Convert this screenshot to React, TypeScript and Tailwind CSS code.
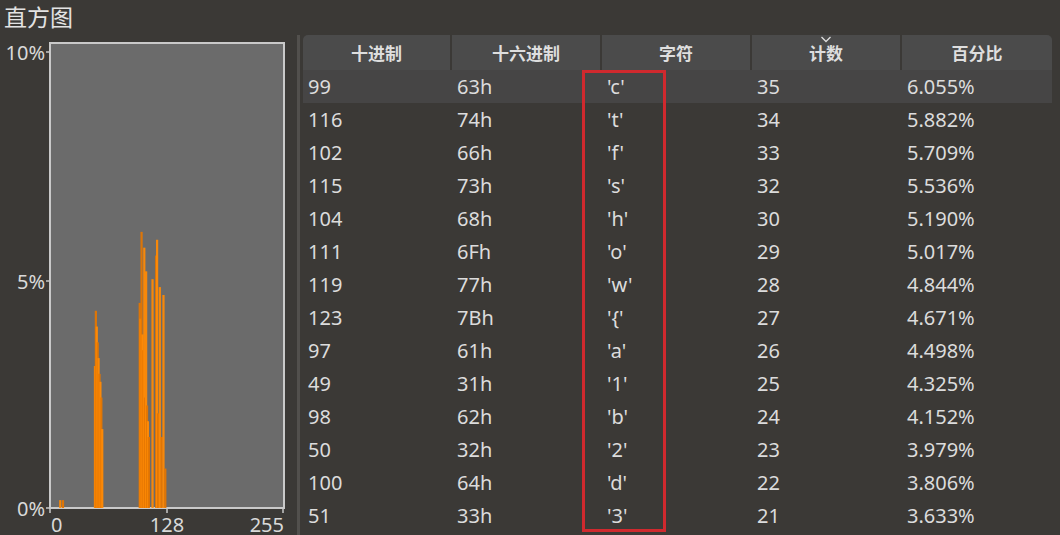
import React from "react"

const rows = [
  [99, "63h", "'c'", 35, "6.055%"],
  [116, "74h", "'t'", 34, "5.882%"],
  [102, "66h", "'f'", 33, "5.709%"],
  [115, "73h", "'s'", 32, "5.536%"],
  [104, "68h", "'h'", 30, "5.190%"],
  [111, "6Fh", "'o'", 29, "5.017%"],
  [119, "77h", "'w'", 28, "4.844%"],
  [123, "7Bh", "'{'", 27, "4.671%"],
  [97, "61h", "'a'", 26, "4.498%"],
  [49, "31h", "'1'", 25, "4.325%"],
  [98, "62h", "'b'", 24, "4.152%"],
  [50, "32h", "'2'", 23, "3.979%"],
  [100, "64h", "'d'", 22, "3.806%"],
  [51, "33h", "'3'", 21, "3.633%"],
] as const

// counts for the bytes not in the visible table rows
const extra: Record<number, number> = {
  10: 1, 13: 1,
  48: 18, 52: 19, 53: 17, 54: 16, 55: 14, 56: 10,
  101: 20, 103: 14, 105: 13, 106: 11, 107: 9, 117: 12, 121: 9, 125: 5,
}

const counts: Record<number, number> = { ...extra }
rows.forEach(r => { counts[r[0]] = r[3] })
const total = 578

const headers = ["十进制", "十六进制", "字符", "计数", "百分比"]

function Histogram() {
  const x0 = 50, xs = 233 / 255, yBase = 508, perPct = 45.6
  const label = { fontSize: 20, fill: "#d9d9d9", fontFamily: "'Noto Sans', sans-serif" }
  return (
    <svg width={300} height={500} viewBox="0 35 300 500" className="block">
      <rect x={50} y={43} width={234} height={465} fill="#6b6b6b" stroke="#c9c9c9" strokeWidth={2} />
      {Object.entries(counts).map(([k, c], i) => {
        const v = Number(k)
        const h = (c / total) * 100 * perPct
        return (
          <rect key={k} x={x0 + v * xs} y={yBase - h} width={2.2} height={h}
            fill={i % 2 ? "#e47602" : "#ff8a05"} opacity={0.95} />
        )
      })}
      <line x1={46} y1={52} x2={50} y2={52} stroke="#c9c9c9" strokeWidth={1.5} />
      <line x1={46} y1={281} x2={50} y2={281} stroke="#c9c9c9" strokeWidth={1.5} />
      <line x1={46} y1={508} x2={50} y2={508} stroke="#c9c9c9" strokeWidth={1.5} />
      <line x1={50} y1={508} x2={50} y2={513} stroke="#c9c9c9" strokeWidth={1.5} />
      <line x1={167} y1={508} x2={167} y2={513} stroke="#c9c9c9" strokeWidth={1.5} />
      <line x1={283} y1={508} x2={283} y2={513} stroke="#c9c9c9" strokeWidth={1.5} />
      <text x={45} y={52} textAnchor="end" dominantBaseline="central" {...label}>10%</text>
      <text x={45} y={281} textAnchor="end" dominantBaseline="central" {...label}>5%</text>
      <text x={45} y={508} textAnchor="end" dominantBaseline="central" {...label}>0%</text>
      <text x={51} y={524} textAnchor="start" dominantBaseline="central" {...label}>0</text>
      <text x={167} y={524} textAnchor="middle" dominantBaseline="central" {...label}>128</text>
      <text x={284} y={524} textAnchor="end" dominantBaseline="central" {...label}>255</text>
    </svg>
  )
}

export default function App() {
  return (
    <div className="w-[1060px] h-[535px] overflow-hidden bg-[#3b3936] flex flex-col font-['Noto_Sans','Noto_Sans_CJK_SC',sans-serif] text-[#dcdcdc]">
      <div className="h-[35px] shrink-0 pl-[4px] text-[23px] leading-[32px] text-[#e3e3e3] font-['Noto_Sans_CJK_SC',sans-serif]">直方图</div>
      <div className="flex flex-1">
        <div className="w-[297px] shrink-0 overflow-hidden">
          <Histogram />
        </div>
        <div className="w-[3px] bg-[#52504d] shrink-0" />
        <div className="relative w-[749px] ml-[3px]">
          <div className="grid grid-cols-[149px_150px_150px_150px_150px] h-[35px] bg-[#4b4b4b] rounded-t-[5px] overflow-hidden">
            {headers.map((h, i) => (
              <div key={h}
                className={`relative flex items-center justify-center text-[17px] font-bold text-[#dedede] font-['Noto_Sans_CJK_SC',sans-serif] ${i < 4 ? "border-r-2 border-[#3b3936]" : ""}`}>
                {i === 3 && (
                  <svg className="absolute top-[1px] left-1/2 -translate-x-1/2" width={11} height={7} viewBox="0 0 11 7">
                    <path d="M1 1 L5.5 5.5 L10 1" fill="none" stroke="#dedede" strokeWidth={1.3} />
                  </svg>
                )}
                {h}
              </div>
            ))}
          </div>
          {rows.map((r, i) => (
            <div key={r[0]}
              className={`grid grid-cols-[149px_150px_150px_150px_150px] h-[33px] items-center text-[20px] ${i === 0 ? "bg-[#464545]" : ""}`}>
              {r.map((c, j) => (
                <div key={j} className="pl-[5px] leading-none">{c}</div>
              ))}
            </div>
          ))}
          <div className="absolute left-[279px] top-[35px] w-[84px] h-[462px] border-[3px] border-[#d0292e]" />
        </div>
      </div>
    </div>
  )
}
